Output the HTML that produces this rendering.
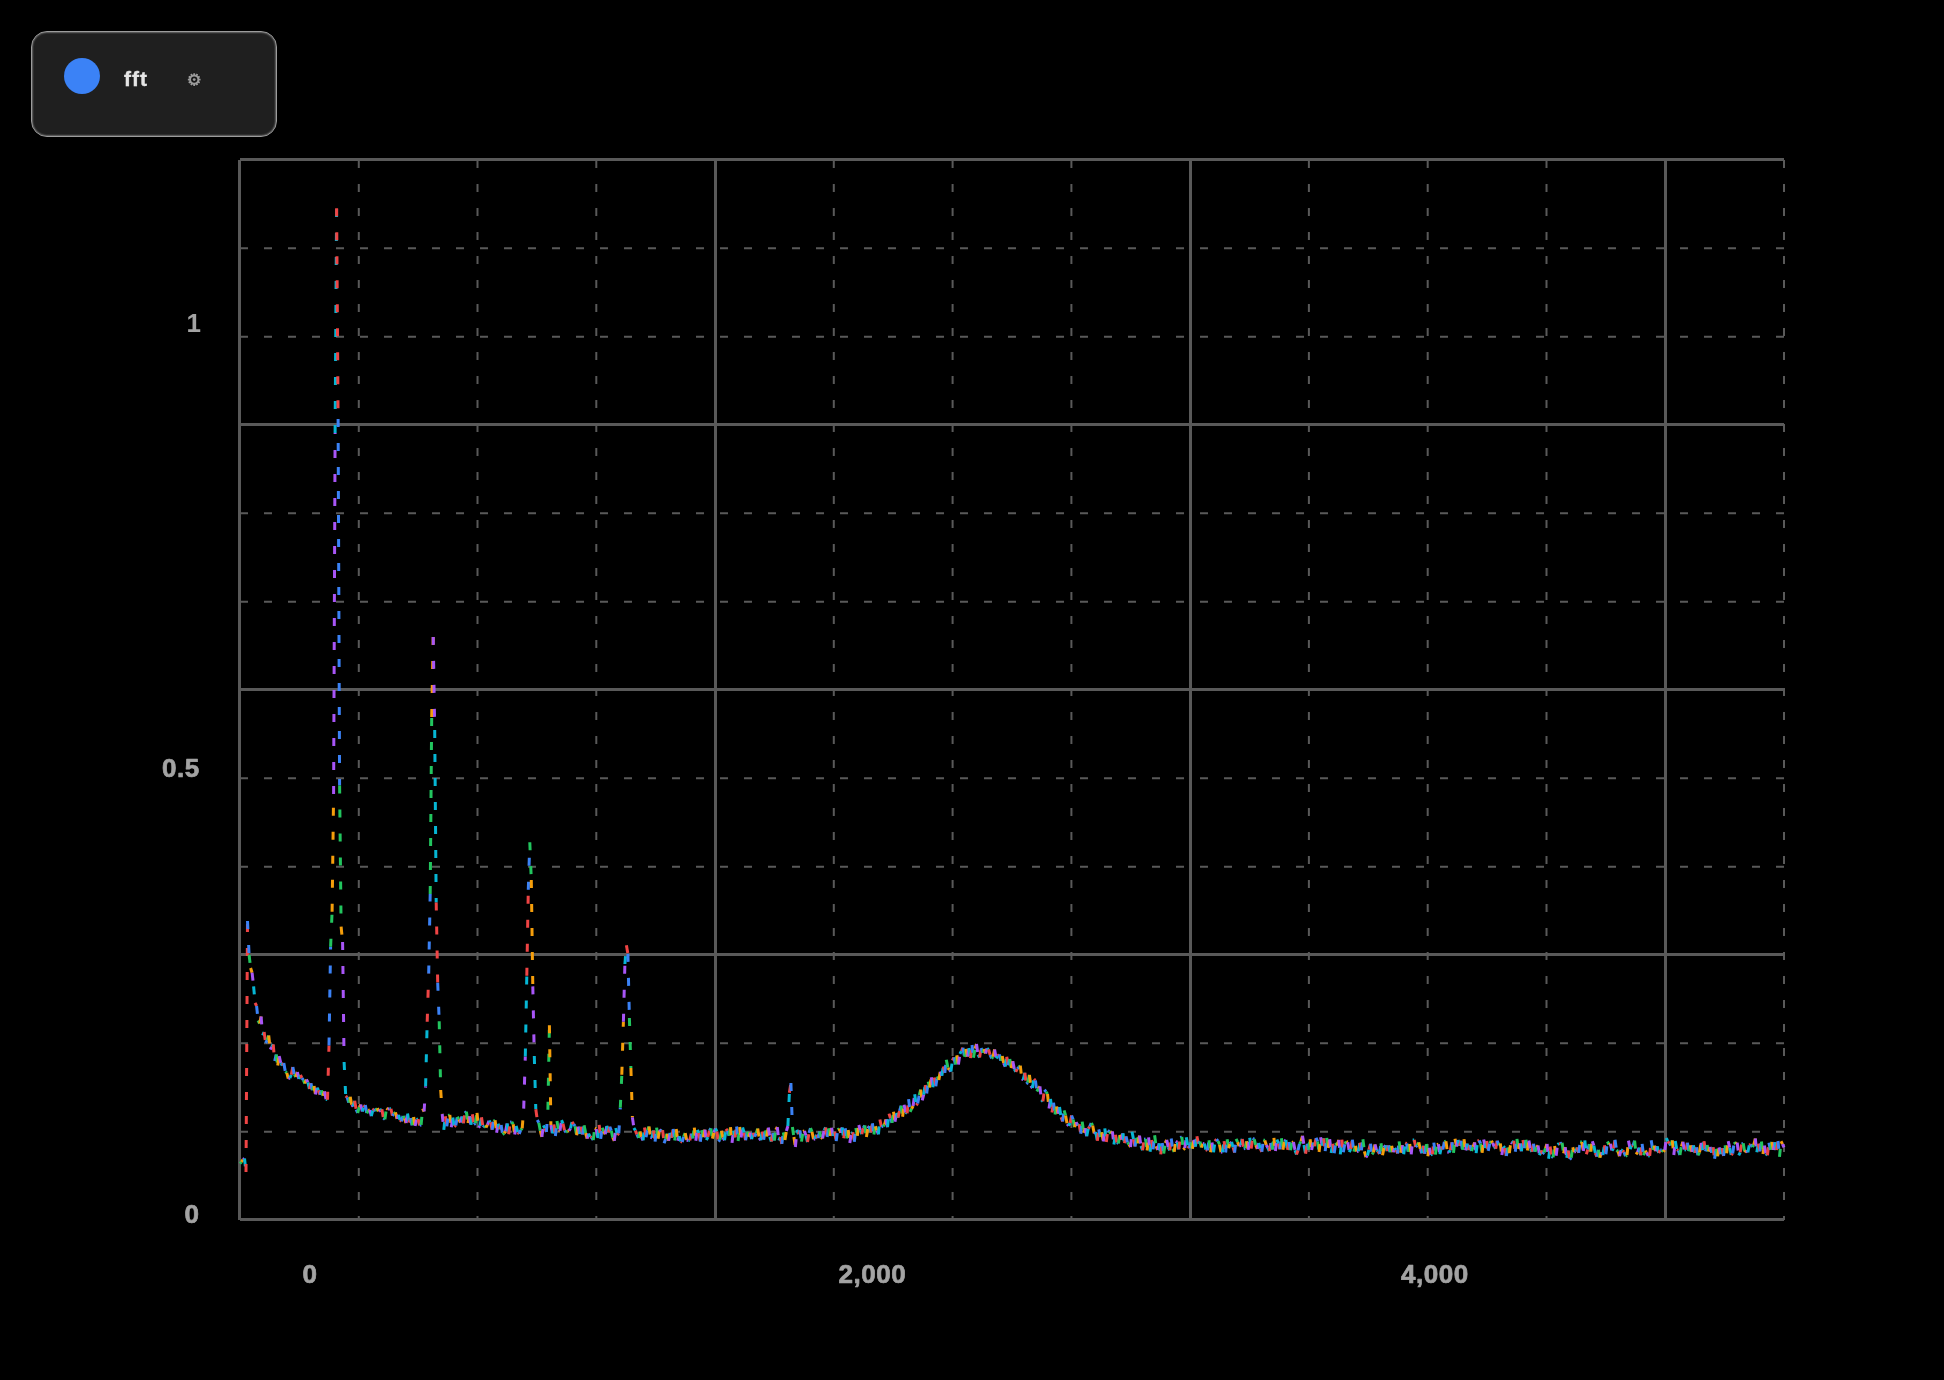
<!DOCTYPE html>
<html lang="en">
<head>
<meta charset="utf-8">
<title>fft</title>
<style>
html,body{margin:0;padding:0;background:#000;}
body{width:1944px;height:1380px;overflow:hidden;position:relative;font-family:"Liberation Sans",sans-serif;}
#chart{position:absolute;left:0;top:0;width:1944px;height:1380px;display:block;will-change:transform;}
.M{stroke:#595959;stroke-width:3;fill:none;}
.m{stroke:#595959;stroke-width:2;stroke-dasharray:8 16;fill:none;}
#curve path{fill:none;stroke-width:3;stroke-dasharray:8 16;stroke-linecap:butt;}
.g{stroke:#22c55e}.o{stroke:#f59e0b}.p{stroke:#a855f7}.c{stroke:#06b6d4}.r{stroke:#ef4444}.b{stroke:#3b82f6}
.tick{font-family:"Liberation Sans",sans-serif;font-weight:bold;font-size:26px;fill:#a3a3a3;stroke:#a3a3a3;stroke-width:0.7px;stroke-linejoin:round;letter-spacing:0.55px;}
#legend{will-change:transform;position:absolute;left:31px;top:31px;width:244px;height:104px;box-sizing:content-box;border:1px solid #9c9c9c;border-radius:16px;background:#1f1f1f;box-shadow:inset 0 0 0 1px #565656,inset 0 0 0 2px #2f2f2f;}
#dot{position:absolute;left:32px;top:26px;width:36px;height:36px;border-radius:50%;background:#3b82f6;}
#name{position:absolute;left:92px;top:34px;font-weight:bold;font-size:21px;line-height:26px;letter-spacing:1px;color:#e5e5e5;-webkit-text-stroke:0.4px #e5e5e5;white-space:nowrap;}
#icons{position:absolute;left:0;top:0;width:1944px;height:1380px;pointer-events:none;}
</style>
</head>
<body>
<svg id="chart" width="1944" height="1380" viewBox="0 0 1944 1380">
<rect x="0" y="0" width="1944" height="1380" fill="#000"/>
<g id="grid">
<line class="M" x1="239.5" y1="160" x2="239.5" y2="1220"/>
<line class="m" x1="358.8" y1="160" x2="358.8" y2="1220"/>
<line class="m" x1="477.5" y1="160" x2="477.5" y2="1220"/>
<line class="m" x1="596.3" y1="160" x2="596.3" y2="1220"/>
<line class="M" x1="715.5" y1="160" x2="715.5" y2="1220"/>
<line class="m" x1="833.8" y1="160" x2="833.8" y2="1220"/>
<line class="m" x1="952.6" y1="160" x2="952.6" y2="1220"/>
<line class="m" x1="1071.4" y1="160" x2="1071.4" y2="1220"/>
<line class="M" x1="1190.5" y1="160" x2="1190.5" y2="1220"/>
<line class="m" x1="1308.9" y1="160" x2="1308.9" y2="1220"/>
<line class="m" x1="1427.7" y1="160" x2="1427.7" y2="1220"/>
<line class="m" x1="1546.5" y1="160" x2="1546.5" y2="1220"/>
<line class="M" x1="1665.5" y1="160" x2="1665.5" y2="1220"/>
<line class="m" x1="1784" y1="160" x2="1784" y2="1220"/>
<line class="M" x1="240" y1="159.5" x2="1784" y2="159.5"/>
<line class="m" x1="240" y1="248.3" x2="1784" y2="248.3"/>
<line class="m" x1="240" y1="336.7" x2="1784" y2="336.7"/>
<line class="M" x1="240" y1="424.5" x2="1784" y2="424.5"/>
<line class="m" x1="240" y1="513.3" x2="1784" y2="513.3"/>
<line class="m" x1="240" y1="601.7" x2="1784" y2="601.7"/>
<line class="M" x1="240" y1="689.5" x2="1784" y2="689.5"/>
<line class="m" x1="240" y1="778.3" x2="1784" y2="778.3"/>
<line class="m" x1="240" y1="866.7" x2="1784" y2="866.7"/>
<line class="M" x1="240" y1="954.5" x2="1784" y2="954.5"/>
<line class="m" x1="240" y1="1043.3" x2="1784" y2="1043.3"/>
<line class="m" x1="240" y1="1131.7" x2="1784" y2="1131.7"/>
<line class="M" x1="240" y1="1219.5" x2="1784" y2="1219.5"/>
</g>
<g id="curve">
<path class="g" d="M240,1163.5L241.5,1162"/>
<path class="o" d="M241.5,1162L243,1159.5"/>
<path class="p" d="M243,1159.5L244.5,1158.5"/>
<path class="c" d="M244.5,1158.5L246,1172"/>
<path class="r" d="M246,1172L247.5,921"/>
<path class="b" d="M247.5,921L249.1,955"/>
<path class="g" d="M249.1,955L250.6,968"/>
<path class="o" d="M250.6,968L252.1,972.7"/>
<path class="p" d="M252.1,972.7L253.6,986.4"/>
<path class="c" d="M253.6,986.4L255.1,1002.8"/>
<path class="r" d="M255.1,1002.8L256.6,1006"/>
<path class="b" d="M256.6,1006L258.1,1020.5"/>
<path class="g" d="M258.1,1020.5L259.6,1023.5"/>
<path class="o" d="M259.6,1023.5L261.1,1016.5"/>
<path class="p" d="M261.1,1016.5L262.6,1035.3"/>
<path class="c" d="M262.6,1035.3L264.1,1032"/>
<path class="r" d="M264.1,1032L265.7,1043"/>
<path class="b" d="M265.7,1043L267.2,1040"/>
<path class="g" d="M267.2,1040L268.7,1035.5"/>
<path class="o" d="M268.7,1035.5L270.2,1049.5"/>
<path class="p" d="M270.2,1049.5L271.7,1047"/>
<path class="c" d="M271.7,1047L273.2,1044.3"/>
<path class="r" d="M273.2,1044.3L274.7,1061"/>
<path class="b" d="M274.7,1061L276.2,1054.5"/>
<path class="g" d="M276.2,1054.5L277.7,1065.5"/>
<path class="o" d="M277.7,1065.5L279.2,1056"/>
<path class="p" d="M279.2,1056L280.8,1063"/>
<path class="c" d="M280.8,1063L282.3,1065.5"/>
<path class="r" d="M282.3,1065.5L283.8,1063"/>
<path class="b" d="M283.8,1063L285.3,1071.6"/>
<path class="g" d="M285.3,1071.6L286.8,1072.8"/>
<path class="o" d="M286.8,1072.8L288.3,1078.6"/>
<path class="p" d="M288.3,1078.6L289.8,1078"/>
<path class="c" d="M289.8,1078L291.3,1074.8"/>
<path class="r" d="M291.3,1074.8L292.8,1067"/>
<path class="b" d="M292.8,1067L294.3,1074.3"/>
<path class="g" d="M294.3,1074.3L295.8,1077"/>
<path class="o" d="M295.8,1077L297.4,1072"/>
<path class="p" d="M297.4,1072L298.9,1079"/>
<path class="c" d="M298.9,1079L300.4,1075"/>
<path class="r" d="M300.4,1075L301.9,1078"/>
<path class="b" d="M301.9,1078L303.4,1080.2"/>
<path class="g" d="M303.4,1080.2L304.9,1083.6"/>
<path class="o" d="M304.9,1083.6L306.4,1079.5"/>
<path class="p" d="M306.4,1079.5L307.9,1082.3"/>
<path class="c" d="M307.9,1082.3L309.4,1089"/>
<path class="r" d="M309.4,1089L310.9,1083.2"/>
<path class="b" d="M310.9,1083.2L312.4,1090.2"/>
<path class="g" d="M312.4,1090.2L314,1085.9"/>
<path class="o" d="M314,1085.9L315.5,1094.5"/>
<path class="p" d="M315.5,1094.5L317,1087.7"/>
<path class="c" d="M317,1087.7L318.5,1090.3"/>
<path class="r" d="M318.5,1090.3L320,1094.8"/>
<path class="b" d="M320,1094.8L321.5,1090.4"/>
<path class="g" d="M321.5,1090.4L323,1095.8"/>
<path class="o" d="M323,1095.8L324.5,1091.4"/>
<path class="p" d="M324.5,1091.4L326,1099.1"/>
<path class="c" d="M326,1099.1L327.5,1099.7"/>
<path class="r" d="M327.5,1099.7L329,1045.5"/>
<path class="b" d="M329,1045.5L330.6,946.7"/>
<path class="g" d="M330.6,946.7L332.1,911.7"/>
<path class="o" d="M332.1,911.7L333.6,794"/>
<path class="p" d="M333.6,794L335.1,433"/>
<path class="c" d="M335.1,433L336.6,208.3"/>
<path class="r" d="M336.6,208.3L338.1,419"/>
<path class="b" d="M338.1,419L339.6,785.5"/>
<path class="g" d="M339.6,785.5L341.1,926.7"/>
<path class="o" d="M341.1,926.7L342.6,942"/>
<path class="p" d="M342.6,942L344.1,1062"/>
<path class="c" d="M344.1,1062L345.7,1096"/>
<path class="r" d="M345.7,1096L347.2,1097.4"/>
<path class="b" d="M347.2,1097.4L348.7,1102.6"/>
<path class="g" d="M348.7,1102.6L350.2,1096.8"/>
<path class="o" d="M350.2,1096.8L351.7,1104.8"/>
<path class="p" d="M351.7,1104.8L353.2,1106.5"/>
<path class="c" d="M353.2,1106.5L354.7,1100.8"/>
<path class="r" d="M354.7,1100.8L356.2,1109.7"/>
<path class="b" d="M356.2,1109.7L357.7,1113"/>
<path class="g" d="M357.7,1113L359.2,1107.2"/>
<path class="o" d="M359.2,1107.2L360.7,1104.5"/>
<path class="p" d="M360.7,1104.5L362.3,1111.5"/>
<path class="c" d="M362.3,1111.5L363.8,1107.6"/>
<path class="r" d="M363.8,1107.6L365.3,1105"/>
<path class="b" d="M365.3,1105L366.8,1113.4"/>
<path class="g" d="M366.8,1113.4L368.3,1110.4"/>
<path class="o" d="M368.3,1110.4L369.8,1110"/>
<path class="p" d="M369.8,1110L371.3,1116.2"/>
<path class="c" d="M371.3,1116.2L372.8,1110.4"/>
<path class="r" d="M372.8,1110.4L374.3,1108.7"/>
<path class="b" d="M374.3,1108.7L375.8,1111.2"/>
<path class="g" d="M375.8,1111.2L377.3,1108.2"/>
<path class="o" d="M377.3,1108.2L378.9,1111.3"/>
<path class="p" d="M378.9,1111.3L380.4,1110.2"/>
<path class="c" d="M380.4,1110.2L381.9,1109.2"/>
<path class="r" d="M381.9,1109.2L383.4,1118.2"/>
<path class="b" d="M383.4,1118.2L384.9,1119.4"/>
<path class="g" d="M384.9,1119.4L386.4,1108.3"/>
<path class="o" d="M386.4,1108.3L387.9,1109.3"/>
<path class="p" d="M387.9,1109.3L389.4,1108.7"/>
<path class="c" d="M389.4,1108.7L390.9,1108.7"/>
<path class="r" d="M390.9,1108.7L392.4,1115.7"/>
<path class="b" d="M392.4,1115.7L393.9,1113.9"/>
<path class="g" d="M393.9,1113.9L395.5,1112.3"/>
<path class="o" d="M395.5,1112.3L397,1118.8"/>
<path class="p" d="M397,1118.8L398.5,1114.8"/>
<path class="c" d="M398.5,1114.8L400,1119.9"/>
<path class="r" d="M400,1119.9L401.5,1121.3"/>
<path class="b" d="M401.5,1121.3L403,1116"/>
<path class="g" d="M403,1116L404.5,1118.2"/>
<path class="o" d="M404.5,1118.2L406,1123.1"/>
<path class="p" d="M406,1123.1L407.5,1113.6"/>
<path class="c" d="M407.5,1113.6L409,1122.6"/>
<path class="r" d="M409,1122.6L410.5,1118.1"/>
<path class="b" d="M410.5,1118.1L412.1,1125.3"/>
<path class="g" d="M412.1,1125.3L413.6,1117.1"/>
<path class="o" d="M413.6,1117.1L415.1,1126"/>
<path class="p" d="M415.1,1126L416.6,1119.6"/>
<path class="c" d="M416.6,1119.6L418.1,1119"/>
<path class="r" d="M418.1,1119L419.6,1125.5"/>
<path class="b" d="M419.6,1125.5L421.1,1124.8"/>
<path class="g" d="M421.1,1124.8L422.6,1108.6"/>
<path class="o" d="M422.6,1108.6L424.1,1111.5"/>
<path class="p" d="M424.1,1111.5L425.6,1086.3"/>
<path class="c" d="M425.6,1086.3L427.2,1021.8"/>
<path class="r" d="M427.2,1021.8L428.7,973.5"/>
<path class="b" d="M428.7,973.5L430.2,894"/>
<path class="g" d="M430.2,894L431.7,717"/>
<path class="o" d="M431.7,717L433.2,636.9"/>
<path class="p" d="M433.2,636.9L434.7,730"/>
<path class="c" d="M434.7,730L436.2,902.5"/>
<path class="r" d="M436.2,902.5L437.7,982.8"/>
<path class="b" d="M437.7,982.8L439.2,1021.2"/>
<path class="g" d="M439.2,1021.2L440.7,1090"/>
<path class="o" d="M440.7,1090L442.2,1114"/>
<path class="p" d="M442.2,1114L443.8,1129.8"/>
<path class="c" d="M443.8,1129.8L445.3,1116.2"/>
<path class="r" d="M445.3,1116.2L446.8,1126.4"/>
<path class="b" d="M446.8,1126.4L448.3,1115.6"/>
<path class="g" d="M448.3,1115.6L449.8,1114.9"/>
<path class="o" d="M449.8,1114.9L451.3,1127.2"/>
<path class="p" d="M451.3,1127.2L452.8,1117.5"/>
<path class="c" d="M452.8,1117.5L454.3,1126.7"/>
<path class="r" d="M454.3,1126.7L455.8,1125.4"/>
<path class="b" d="M455.8,1125.4L457.3,1116.7"/>
<path class="g" d="M457.3,1116.7L458.8,1119.3"/>
<path class="o" d="M458.8,1119.3L460.4,1122.5"/>
<path class="p" d="M460.4,1122.5L461.9,1116.5"/>
<path class="c" d="M461.9,1116.5L463.4,1123.3"/>
<path class="r" d="M463.4,1123.3L464.9,1113.1"/>
<path class="b" d="M464.9,1113.1L466.4,1111.6"/>
<path class="g" d="M466.4,1111.6L467.9,1123"/>
<path class="o" d="M467.9,1123L469.4,1116.3"/>
<path class="p" d="M469.4,1116.3L470.9,1124.9"/>
<path class="c" d="M470.9,1124.9L472.4,1114.3"/>
<path class="r" d="M472.4,1114.3L473.9,1124.5"/>
<path class="b" d="M473.9,1124.5L475.4,1123.2"/>
<path class="g" d="M475.4,1123.2L477,1112.8"/>
<path class="o" d="M477,1112.8L478.5,1127.5"/>
<path class="p" d="M478.5,1127.5L480,1126"/>
<path class="c" d="M480,1126L481.5,1117.2"/>
<path class="r" d="M481.5,1117.2L483,1127.2"/>
<path class="b" d="M483,1127.2L484.5,1125.7"/>
<path class="g" d="M484.5,1125.7L486,1127.7"/>
<path class="o" d="M486,1127.7L487.5,1124.7"/>
<path class="p" d="M487.5,1124.7L489,1120.8"/>
<path class="c" d="M489,1120.8L490.5,1122.3"/>
<path class="r" d="M490.5,1122.3L492.1,1129.7"/>
<path class="b" d="M492.1,1129.7L493.6,1121.3"/>
<path class="g" d="M493.6,1121.3L495.1,1120.3"/>
<path class="o" d="M495.1,1120.3L496.6,1132.8"/>
<path class="p" d="M496.6,1132.8L498.1,1123.7"/>
<path class="c" d="M498.1,1123.7L499.6,1129.3"/>
<path class="r" d="M499.6,1129.3L501.1,1124.9"/>
<path class="b" d="M501.1,1124.9L502.6,1134.5"/>
<path class="g" d="M502.6,1134.5L504.1,1133.2"/>
<path class="o" d="M504.1,1133.2L505.6,1131.3"/>
<path class="p" d="M505.6,1131.3L507.1,1123.5"/>
<path class="c" d="M507.1,1123.5L508.7,1134.3"/>
<path class="r" d="M508.7,1134.3L510.2,1122.3"/>
<path class="b" d="M510.2,1122.3L511.7,1121.9"/>
<path class="g" d="M511.7,1121.9L513.2,1124.3"/>
<path class="o" d="M513.2,1124.3L514.7,1134.5"/>
<path class="p" d="M514.7,1134.5L516.2,1125.9"/>
<path class="c" d="M516.2,1125.9L517.7,1132.2"/>
<path class="r" d="M517.7,1132.2L519.2,1133.9"/>
<path class="b" d="M519.2,1133.9L520.7,1130"/>
<path class="g" d="M520.7,1130L522.2,1128.3"/>
<path class="o" d="M522.2,1128.3L523.7,1108.6"/>
<path class="p" d="M523.7,1108.6L525.3,1056.5"/>
<path class="c" d="M525.3,1056.5L526.8,975.8"/>
<path class="r" d="M526.8,975.8L528.3,889.7"/>
<path class="b" d="M528.3,889.7L529.8,842.2"/>
<path class="g" d="M529.8,842.2L531.3,880"/>
<path class="o" d="M531.3,880L532.8,986.4"/>
<path class="p" d="M532.8,986.4L534.3,1056"/>
<path class="c" d="M534.3,1056L535.8,1109.2"/>
<path class="r" d="M535.8,1109.2L537.3,1120"/>
<path class="b" d="M537.3,1120L538.8,1122.8"/>
<path class="g" d="M538.8,1122.8L540.3,1130.9"/>
<path class="o" d="M540.3,1130.9L541.9,1136.9"/>
<path class="p" d="M541.9,1136.9L543.4,1125.4"/>
<path class="c" d="M543.4,1125.4L544.9,1128.2"/>
<path class="r" d="M544.9,1128.2L546.4,1132"/>
<path class="b" d="M546.4,1132L547.9,1109.8"/>
<path class="g" d="M547.9,1109.8L549.4,1025.2"/>
<path class="o" d="M549.4,1025.2L550.9,1125"/>
<path class="p" d="M550.9,1125L552.4,1133.6"/>
<path class="c" d="M552.4,1133.6L553.9,1124.4"/>
<path class="r" d="M553.9,1124.4L555.4,1136"/>
<path class="b" d="M555.4,1136L557,1121"/>
<path class="g" d="M557,1121L558.5,1130.1"/>
<path class="o" d="M558.5,1130.1L560,1130.7"/>
<path class="p" d="M560,1130.7L561.5,1120.2"/>
<path class="c" d="M561.5,1120.2L563,1123.6"/>
<path class="r" d="M563,1123.6L564.5,1130.5"/>
<path class="b" d="M564.5,1130.5L566,1132.2"/>
<path class="g" d="M566,1132.2L567.5,1131.1"/>
<path class="o" d="M567.5,1131.1L569,1130.7"/>
<path class="p" d="M569,1130.7L570.5,1128.4"/>
<path class="c" d="M570.5,1128.4L572,1122"/>
<path class="r" d="M572,1122L573.6,1124.2"/>
<path class="b" d="M573.6,1124.2L575.1,1126.2"/>
<path class="g" d="M575.1,1126.2L576.6,1135.2"/>
<path class="o" d="M576.6,1135.2L578.1,1126.5"/>
<path class="p" d="M578.1,1126.5L579.6,1134"/>
<path class="c" d="M579.6,1134L581.1,1126.7"/>
<path class="r" d="M581.1,1126.7L582.6,1134.5"/>
<path class="b" d="M582.6,1134.5L584.1,1125.3"/>
<path class="g" d="M584.1,1125.3L585.6,1133.1"/>
<path class="o" d="M585.6,1133.1L587.1,1138.6"/>
<path class="p" d="M587.1,1138.6L588.6,1133.6"/>
<path class="c" d="M588.6,1133.6L590.2,1136.8"/>
<path class="r" d="M590.2,1136.8L591.7,1137.5"/>
<path class="b" d="M591.7,1137.5L593.2,1140.1"/>
<path class="g" d="M593.2,1140.1L594.7,1128.4"/>
<path class="o" d="M594.7,1128.4L596.2,1128.9"/>
<path class="p" d="M596.2,1128.9L597.7,1138.2"/>
<path class="c" d="M597.7,1138.2L599.2,1124.9"/>
<path class="r" d="M599.2,1124.9L600.7,1138.9"/>
<path class="b" d="M600.7,1138.9L602.2,1127.7"/>
<path class="g" d="M602.2,1127.7L603.7,1131.4"/>
<path class="o" d="M603.7,1131.4L605.2,1134.3"/>
<path class="p" d="M605.2,1134.3L606.8,1125.7"/>
<path class="c" d="M606.8,1125.7L608.3,1132.5"/>
<path class="r" d="M608.3,1132.5L609.8,1126.7"/>
<path class="b" d="M609.8,1126.7L611.3,1130.8"/>
<path class="g" d="M611.3,1130.8L612.8,1137.7"/>
<path class="o" d="M612.8,1137.7L614.3,1140.8"/>
<path class="p" d="M614.3,1140.8L615.8,1128"/>
<path class="c" d="M615.8,1128L617.3,1135"/>
<path class="r" d="M617.3,1135L618.8,1133.3"/>
<path class="b" d="M618.8,1133.3L620.3,1107.8"/>
<path class="g" d="M620.3,1107.8L621.8,1074.8"/>
<path class="o" d="M621.8,1074.8L623.4,1021.7"/>
<path class="p" d="M623.4,1021.7L624.9,964"/>
<path class="c" d="M624.9,964L626.4,945.2"/>
<path class="r" d="M626.4,945.2L627.9,953.9"/>
<path class="b" d="M627.9,953.9L629.4,1018"/>
<path class="g" d="M629.4,1018L630.9,1068"/>
<path class="o" d="M630.9,1068L632.4,1117.4"/>
<path class="p" d="M632.4,1117.4L633.9,1128"/>
<path class="c" d="M633.9,1128L635.4,1130.6"/>
<path class="r" d="M635.4,1130.6L636.9,1134.4"/>
<path class="b" d="M636.9,1134.4L638.5,1137.8"/>
<path class="g" d="M638.5,1137.8L640,1131.5"/>
<path class="o" d="M640,1131.5L641.5,1136.8"/>
<path class="p" d="M641.5,1136.8L643,1140.3"/>
<path class="c" d="M643,1140.3L644.5,1127.4"/>
<path class="r" d="M644.5,1127.4L646,1137.2"/>
<path class="b" d="M646,1137.2L647.5,1130.3"/>
<path class="g" d="M647.5,1130.3L649,1126.5"/>
<path class="o" d="M649,1126.5L650.5,1137.3"/>
<path class="p" d="M650.5,1137.3L652,1137.7"/>
<path class="c" d="M652,1137.7L653.5,1130.5"/>
<path class="r" d="M653.5,1130.5L655.1,1141.6"/>
<path class="b" d="M655.1,1141.6L656.6,1127.6"/>
<path class="g" d="M656.6,1127.6L658.1,1138.7"/>
<path class="o" d="M658.1,1138.7L659.6,1129.4"/>
<path class="p" d="M659.6,1129.4L661.1,1131.6"/>
<path class="c" d="M661.1,1131.6L662.6,1130.2"/>
<path class="r" d="M662.6,1130.2L664.1,1143.3"/>
<path class="b" d="M664.1,1143.3L665.6,1139"/>
<path class="g" d="M665.6,1139L667.1,1133.7"/>
<path class="o" d="M667.1,1133.7L668.6,1140.8"/>
<path class="p" d="M668.6,1140.8L670.1,1132.7"/>
<path class="c" d="M670.1,1132.7L671.7,1137.8"/>
<path class="r" d="M671.7,1137.8L673.2,1128.9"/>
<path class="b" d="M673.2,1128.9L674.7,1140.5"/>
<path class="g" d="M674.7,1140.5L676.2,1129"/>
<path class="o" d="M676.2,1129L677.7,1140.7"/>
<path class="p" d="M677.7,1140.7L679.2,1136.2"/>
<path class="c" d="M679.2,1136.2L680.7,1141.4"/>
<path class="r" d="M680.7,1141.4L682.2,1142"/>
<path class="b" d="M682.2,1142L683.7,1136.6"/>
<path class="g" d="M683.7,1136.6L685.2,1133.1"/>
<path class="o" d="M685.2,1133.1L686.7,1140"/>
<path class="p" d="M686.7,1140L688.3,1140.5"/>
<path class="c" d="M688.3,1140.5L689.8,1140.3"/>
<path class="r" d="M689.8,1140.3L691.3,1133.6"/>
<path class="b" d="M691.3,1133.6L692.8,1138.4"/>
<path class="g" d="M692.8,1138.4L694.3,1127.6"/>
<path class="o" d="M694.3,1127.6L695.8,1140.7"/>
<path class="p" d="M695.8,1140.7L697.3,1129.9"/>
<path class="c" d="M697.3,1129.9L698.8,1133.1"/>
<path class="r" d="M698.8,1133.1L700.3,1141.8"/>
<path class="b" d="M700.3,1141.8L701.8,1130.2"/>
<path class="g" d="M701.8,1130.2L703.4,1137.1"/>
<path class="o" d="M703.4,1137.1L704.9,1129.6"/>
<path class="p" d="M704.9,1129.6L706.4,1140.1"/>
<path class="c" d="M706.4,1140.1L707.9,1137"/>
<path class="r" d="M707.9,1137L709.4,1130.5"/>
<path class="b" d="M709.4,1130.5L710.9,1128.4"/>
<path class="g" d="M710.9,1128.4L712.4,1138.7"/>
<path class="o" d="M712.4,1138.7L713.9,1132.6"/>
<path class="p" d="M713.9,1132.6L715.4,1128.5"/>
<path class="c" d="M715.4,1128.5L716.9,1131.5"/>
<path class="r" d="M716.9,1131.5L718.4,1141.6"/>
<path class="b" d="M718.4,1141.6L720,1139.8"/>
<path class="g" d="M720,1139.8L721.5,1130.7"/>
<path class="o" d="M721.5,1130.7L723,1137.6"/>
<path class="p" d="M723,1137.6L724.5,1140.2"/>
<path class="c" d="M724.5,1140.2L726,1128.8"/>
<path class="r" d="M726,1128.8L727.5,1130.9"/>
<path class="b" d="M727.5,1130.9L729,1135.8"/>
<path class="g" d="M729,1135.8L730.5,1127.1"/>
<path class="o" d="M730.5,1127.1L732,1142.9"/>
<path class="p" d="M732,1142.9L733.5,1130.6"/>
<path class="c" d="M733.5,1130.6L735,1137.4"/>
<path class="r" d="M735,1137.4L736.6,1126.5"/>
<path class="b" d="M736.6,1126.5L738.1,1141"/>
<path class="g" d="M738.1,1141L739.6,1127"/>
<path class="o" d="M739.6,1127L741.1,1137.5"/>
<path class="p" d="M741.1,1137.5L742.6,1127.3"/>
<path class="c" d="M742.6,1127.3L744.1,1132.7"/>
<path class="r" d="M744.1,1132.7L745.6,1140.3"/>
<path class="b" d="M745.6,1140.3L747.1,1131.7"/>
<path class="g" d="M747.1,1131.7L748.6,1136.7"/>
<path class="o" d="M748.6,1136.7L750.1,1132.6"/>
<path class="p" d="M750.1,1132.6L751.6,1139.2"/>
<path class="c" d="M751.6,1139.2L753.2,1132.8"/>
<path class="r" d="M753.2,1132.8L754.7,1136.6"/>
<path class="b" d="M754.7,1136.6L756.2,1133.3"/>
<path class="g" d="M756.2,1133.3L757.7,1128.6"/>
<path class="o" d="M757.7,1128.6L759.2,1137.9"/>
<path class="p" d="M759.2,1137.9L760.7,1140.3"/>
<path class="c" d="M760.7,1140.3L762.2,1131.4"/>
<path class="r" d="M762.2,1131.4L763.7,1139.8"/>
<path class="b" d="M763.7,1139.8L765.2,1130.4"/>
<path class="g" d="M765.2,1130.4L766.7,1136.4"/>
<path class="o" d="M766.7,1136.4L768.3,1127.6"/>
<path class="p" d="M768.3,1127.6L769.8,1136.8"/>
<path class="c" d="M769.8,1136.8L771.3,1141.6"/>
<path class="r" d="M771.3,1141.6L772.8,1133"/>
<path class="b" d="M772.8,1133L774.3,1140.5"/>
<path class="g" d="M774.3,1140.5L775.8,1129.8"/>
<path class="o" d="M775.8,1129.8L777.3,1127.1"/>
<path class="p" d="M777.3,1127.1L778.8,1140.5"/>
<path class="c" d="M778.8,1140.5L780.3,1137"/>
<path class="r" d="M780.3,1137L781.8,1143.9"/>
<path class="b" d="M781.8,1143.9L783.3,1132.4"/>
<path class="g" d="M783.3,1132.4L784.9,1139.9"/>
<path class="o" d="M784.9,1139.9L786.4,1131"/>
<path class="p" d="M786.4,1131L787.9,1126"/>
<path class="c" d="M787.9,1126L789.4,1092.8"/>
<path class="r" d="M789.4,1092.8L790.9,1083"/>
<path class="b" d="M790.9,1083L792.4,1127"/>
<path class="g" d="M792.4,1127L793.9,1137"/>
<path class="o" d="M793.9,1137L795.4,1147"/>
<path class="p" d="M795.4,1147L796.9,1129.8"/>
<path class="c" d="M796.9,1129.8L798.4,1134.3"/>
<path class="r" d="M798.4,1134.3L799.9,1130.4"/>
<path class="b" d="M799.9,1130.4L801.5,1141.6"/>
<path class="g" d="M801.5,1141.6L803,1131.5"/>
<path class="o" d="M803,1131.5L804.5,1131"/>
<path class="p" d="M804.5,1131L806,1135.6"/>
<path class="c" d="M806,1135.6L807.5,1142.1"/>
<path class="r" d="M807.5,1142.1L809,1132.9"/>
<path class="b" d="M809,1132.9L810.5,1128.2"/>
<path class="g" d="M810.5,1128.2L812,1131.8"/>
<path class="o" d="M812,1131.8L813.5,1139.3"/>
<path class="p" d="M813.5,1139.3L815,1138.8"/>
<path class="c" d="M815,1138.8L816.5,1134.8"/>
<path class="r" d="M816.5,1134.8L818.1,1138.2"/>
<path class="b" d="M818.1,1138.2L819.6,1131.5"/>
<path class="g" d="M819.6,1131.5L821.1,1137.4"/>
<path class="o" d="M821.1,1137.4L822.6,1138.6"/>
<path class="p" d="M822.6,1138.6L824.1,1130.2"/>
<path class="c" d="M824.1,1130.2L825.6,1127.6"/>
<path class="r" d="M825.6,1127.6L827.1,1137.1"/>
<path class="b" d="M827.1,1137.1L828.6,1128.3"/>
<path class="g" d="M828.6,1128.3L830.1,1135.9"/>
<path class="o" d="M830.1,1135.9L831.6,1127.8"/>
<path class="p" d="M831.6,1127.8L833.1,1136"/>
<path class="c" d="M833.1,1136L834.7,1131.6"/>
<path class="r" d="M834.7,1131.6L836.2,1141.1"/>
<path class="b" d="M836.2,1141.1L837.7,1129.7"/>
<path class="g" d="M837.7,1129.7L839.2,1128.6"/>
<path class="o" d="M839.2,1128.6L840.7,1132.8"/>
<path class="p" d="M840.7,1132.8L842.2,1127.5"/>
<path class="c" d="M842.2,1127.5L843.7,1138.2"/>
<path class="r" d="M843.7,1138.2L845.2,1128.2"/>
<path class="b" d="M845.2,1128.2L846.7,1138.6"/>
<path class="g" d="M846.7,1138.6L848.2,1130"/>
<path class="o" d="M848.2,1130L849.8,1142.9"/>
<path class="p" d="M849.8,1142.9L851.3,1133.6"/>
<path class="c" d="M851.3,1133.6L852.8,1132.3"/>
<path class="r" d="M852.8,1132.3L854.3,1141.9"/>
<path class="b" d="M854.3,1141.9L855.8,1128"/>
<path class="g" d="M855.8,1128L857.3,1135.8"/>
<path class="o" d="M857.3,1135.8L858.8,1125"/>
<path class="p" d="M858.8,1125L860.3,1130.3"/>
<path class="c" d="M860.3,1130.3L861.8,1134.1"/>
<path class="r" d="M861.8,1134.1L863.3,1128.1"/>
<path class="b" d="M863.3,1128.1L864.8,1125.4"/>
<path class="g" d="M864.8,1125.4L866.4,1136.9"/>
<path class="o" d="M866.4,1136.9L867.9,1128.4"/>
<path class="p" d="M867.9,1128.4L869.4,1126.2"/>
<path class="c" d="M869.4,1126.2L870.9,1132.5"/>
<path class="r" d="M870.9,1132.5L872.4,1123.3"/>
<path class="b" d="M872.4,1123.3L873.9,1134.6"/>
<path class="g" d="M873.9,1134.6L875.4,1126.2"/>
<path class="o" d="M875.4,1126.2L876.9,1130.4"/>
<path class="p" d="M876.9,1130.4L878.4,1134.3"/>
<path class="c" d="M878.4,1134.3L879.9,1119.5"/>
<path class="r" d="M879.9,1119.5L881.4,1126.7"/>
<path class="b" d="M881.4,1126.7L883,1126.2"/>
<path class="g" d="M883,1126.2L884.5,1124.6"/>
<path class="o" d="M884.5,1124.6L886,1119.4"/>
<path class="p" d="M886,1119.4L887.5,1127.2"/>
<path class="c" d="M887.5,1127.2L889,1113.6"/>
<path class="r" d="M889,1113.6L890.5,1118.4"/>
<path class="b" d="M890.5,1118.4L892,1122.9"/>
<path class="g" d="M892,1122.9L893.5,1111.8"/>
<path class="o" d="M893.5,1111.8L895,1121.8"/>
<path class="p" d="M895,1121.8L896.5,1112.9"/>
<path class="c" d="M896.5,1112.9L898,1117.7"/>
<path class="r" d="M898,1117.7L899.6,1110.8"/>
<path class="b" d="M899.6,1110.8L901.1,1105.7"/>
<path class="g" d="M901.1,1105.7L902.6,1116.7"/>
<path class="o" d="M902.6,1116.7L904.1,1104.7"/>
<path class="p" d="M904.1,1104.7L905.6,1112.5"/>
<path class="c" d="M905.6,1112.5L907.1,1113.3"/>
<path class="r" d="M907.1,1113.3L908.6,1099.1"/>
<path class="b" d="M908.6,1099.1L910.1,1111.8"/>
<path class="g" d="M910.1,1111.8L911.6,1108.7"/>
<path class="o" d="M911.6,1108.7L913.1,1106"/>
<path class="p" d="M913.1,1106L914.7,1094.2"/>
<path class="c" d="M914.7,1094.2L916.2,1105.1"/>
<path class="r" d="M916.2,1105.1L917.7,1103.5"/>
<path class="b" d="M917.7,1103.5L919.2,1095.1"/>
<path class="g" d="M919.2,1095.1L920.7,1089.6"/>
<path class="o" d="M920.7,1089.6L922.2,1100.4"/>
<path class="p" d="M922.2,1100.4L923.7,1094.7"/>
<path class="c" d="M923.7,1094.7L925.2,1085.1"/>
<path class="r" d="M925.2,1085.1L926.7,1093.5"/>
<path class="b" d="M926.7,1093.5L928.2,1081.7"/>
<path class="g" d="M928.2,1081.7L929.7,1087.5"/>
<path class="o" d="M929.7,1087.5L931.3,1077.3"/>
<path class="p" d="M931.3,1077.3L932.8,1087.3"/>
<path class="c" d="M932.8,1087.3L934.3,1077.6"/>
<path class="r" d="M934.3,1077.6L935.8,1086.4"/>
<path class="b" d="M935.8,1086.4L937.3,1076.3"/>
<path class="g" d="M937.3,1076.3L938.8,1079.9"/>
<path class="o" d="M938.8,1079.9L940.3,1071.5"/>
<path class="p" d="M940.3,1071.5L941.8,1075.8"/>
<path class="c" d="M941.8,1075.8L943.3,1066.3"/>
<path class="r" d="M943.3,1066.3L944.8,1072.9"/>
<path class="b" d="M944.8,1072.9L946.3,1059.8"/>
<path class="g" d="M946.3,1059.8L947.9,1067.8"/>
<path class="o" d="M947.9,1067.8L949.4,1069.8"/>
<path class="p" d="M949.4,1069.8L950.9,1071.6"/>
<path class="c" d="M950.9,1071.6L952.4,1060.5"/>
<path class="r" d="M952.4,1060.5L953.9,1057.4"/>
<path class="b" d="M953.9,1057.4L955.4,1064.4"/>
<path class="g" d="M955.4,1064.4L956.9,1055.3"/>
<path class="o" d="M956.9,1055.3L958.4,1064.6"/>
<path class="p" d="M958.4,1064.6L959.9,1053.9"/>
<path class="c" d="M959.9,1053.9L961.4,1051"/>
<path class="r" d="M961.4,1051L962.9,1047.7"/>
<path class="b" d="M962.9,1047.7L964.5,1056.9"/>
<path class="g" d="M964.5,1056.9L966,1048.9"/>
<path class="o" d="M966,1048.9L967.5,1056.6"/>
<path class="p" d="M967.5,1056.6L969,1048"/>
<path class="c" d="M969,1048L970.5,1058.2"/>
<path class="r" d="M970.5,1058.2L972,1045"/>
<path class="b" d="M972,1045L973.5,1057.7"/>
<path class="g" d="M973.5,1057.7L975,1048.6"/>
<path class="o" d="M975,1048.6L976.5,1044"/>
<path class="p" d="M976.5,1044L978,1054.8"/>
<path class="c" d="M978,1054.8L979.6,1057.6"/>
<path class="r" d="M979.6,1057.6L981.1,1048"/>
<path class="b" d="M981.1,1048L982.6,1052.7"/>
<path class="g" d="M982.6,1052.7L984.1,1049"/>
<path class="o" d="M984.1,1049L985.6,1053.5"/>
<path class="p" d="M985.6,1053.5L987.1,1048.4"/>
<path class="c" d="M987.1,1048.4L988.6,1049.4"/>
<path class="r" d="M988.6,1049.4L990.1,1054.8"/>
<path class="b" d="M990.1,1054.8L991.6,1058.4"/>
<path class="g" d="M991.6,1058.4L993.1,1056.8"/>
<path class="o" d="M993.1,1056.8L994.6,1049.4"/>
<path class="p" d="M994.6,1049.4L996.2,1058.3"/>
<path class="c" d="M996.2,1058.3L997.7,1056.1"/>
<path class="r" d="M997.7,1056.1L999.2,1054.4"/>
<path class="b" d="M999.2,1054.4L1000.7,1060.7"/>
<path class="g" d="M1000.7,1060.7L1002.2,1056"/>
<path class="o" d="M1002.2,1056L1003.7,1063.1"/>
<path class="p" d="M1003.7,1063.1L1005.2,1066.6"/>
<path class="c" d="M1005.2,1066.6L1006.7,1056.8"/>
<path class="r" d="M1006.7,1056.8L1008.2,1065.4"/>
<path class="b" d="M1008.2,1065.4L1009.7,1059"/>
<path class="g" d="M1009.7,1059L1011.2,1068.1"/>
<path class="o" d="M1011.2,1068.1L1012.8,1061.2"/>
<path class="p" d="M1012.8,1061.2L1014.3,1069"/>
<path class="c" d="M1014.3,1069L1015.8,1071.8"/>
<path class="r" d="M1015.8,1071.8L1017.3,1068.8"/>
<path class="b" d="M1017.3,1068.8L1018.8,1067.3"/>
<path class="g" d="M1018.8,1067.3L1020.3,1065.7"/>
<path class="o" d="M1020.3,1065.7L1021.8,1078.9"/>
<path class="p" d="M1021.8,1078.9L1023.3,1079.7"/>
<path class="c" d="M1023.3,1079.7L1024.8,1072.7"/>
<path class="r" d="M1024.8,1072.7L1026.3,1083.9"/>
<path class="b" d="M1026.3,1083.9L1027.8,1082.6"/>
<path class="g" d="M1027.8,1082.6L1029.4,1074.9"/>
<path class="o" d="M1029.4,1074.9L1030.9,1085.7"/>
<path class="p" d="M1030.9,1085.7L1032.4,1088.1"/>
<path class="c" d="M1032.4,1088.1L1033.9,1079"/>
<path class="r" d="M1033.9,1079L1035.4,1080.4"/>
<path class="b" d="M1035.4,1080.4L1036.9,1091.5"/>
<path class="g" d="M1036.9,1091.5L1038.4,1088.5"/>
<path class="o" d="M1038.4,1088.5L1039.9,1086.4"/>
<path class="p" d="M1039.9,1086.4L1041.4,1099.9"/>
<path class="c" d="M1041.4,1099.9L1042.9,1101.4"/>
<path class="r" d="M1042.9,1101.4L1044.4,1089.8"/>
<path class="b" d="M1044.4,1089.8L1046,1091.7"/>
<path class="g" d="M1046,1091.7L1047.5,1094"/>
<path class="o" d="M1047.5,1094L1049,1108.5"/>
<path class="p" d="M1049,1108.5L1050.5,1098.9"/>
<path class="c" d="M1050.5,1098.9L1052,1112.4"/>
<path class="r" d="M1052,1112.4L1053.5,1102.6"/>
<path class="b" d="M1053.5,1102.6L1055,1114.6"/>
<path class="g" d="M1055,1114.6L1056.5,1106.5"/>
<path class="o" d="M1056.5,1106.5L1058,1113.7"/>
<path class="p" d="M1058,1113.7L1059.5,1107.1"/>
<path class="c" d="M1059.5,1107.1L1061.1,1117.3"/>
<path class="r" d="M1061.1,1117.3L1062.6,1121.5"/>
<path class="b" d="M1062.6,1121.5L1064.1,1110.4"/>
<path class="g" d="M1064.1,1110.4L1065.6,1115.4"/>
<path class="o" d="M1065.6,1115.4L1067.1,1124"/>
<path class="p" d="M1067.1,1124L1068.6,1125.7"/>
<path class="c" d="M1068.6,1125.7L1070.1,1123"/>
<path class="r" d="M1070.1,1123L1071.6,1115.4"/>
<path class="b" d="M1071.6,1115.4L1073.1,1119.5"/>
<path class="g" d="M1073.1,1119.5L1074.6,1127.1"/>
<path class="o" d="M1074.6,1127.1L1076.1,1122.2"/>
<path class="p" d="M1076.1,1122.2L1077.7,1125.7"/>
<path class="c" d="M1077.7,1125.7L1079.2,1124.2"/>
<path class="r" d="M1079.2,1124.2L1080.7,1133.8"/>
<path class="b" d="M1080.7,1133.8L1082.2,1121.6"/>
<path class="g" d="M1082.2,1121.6L1083.7,1132.7"/>
<path class="o" d="M1083.7,1132.7L1085.2,1128.3"/>
<path class="p" d="M1085.2,1128.3L1086.7,1136.3"/>
<path class="c" d="M1086.7,1136.3L1088.2,1128.6"/>
<path class="r" d="M1088.2,1128.6L1089.7,1126.7"/>
<path class="b" d="M1089.7,1126.7L1091.2,1123.2"/>
<path class="g" d="M1091.2,1123.2L1092.7,1125.4"/>
<path class="o" d="M1092.7,1125.4L1094.3,1134.2"/>
<path class="p" d="M1094.3,1134.2L1095.8,1132"/>
<path class="c" d="M1095.8,1132L1097.3,1140.9"/>
<path class="r" d="M1097.3,1140.9L1098.8,1129.4"/>
<path class="b" d="M1098.8,1129.4L1100.3,1137"/>
<path class="g" d="M1100.3,1137L1101.8,1132.3"/>
<path class="o" d="M1101.8,1132.3L1103.3,1141.5"/>
<path class="p" d="M1103.3,1141.5L1104.8,1128.4"/>
<path class="c" d="M1104.8,1128.4L1106.3,1142"/>
<path class="r" d="M1106.3,1142L1107.8,1130.4"/>
<path class="b" d="M1107.8,1130.4L1109.3,1131.4"/>
<path class="g" d="M1109.3,1131.4L1110.9,1133.6"/>
<path class="o" d="M1110.9,1133.6L1112.4,1131.4"/>
<path class="p" d="M1112.4,1131.4L1113.9,1144.6"/>
<path class="c" d="M1113.9,1144.6L1115.4,1134.8"/>
<path class="r" d="M1115.4,1134.8L1116.9,1142.5"/>
<path class="b" d="M1116.9,1142.5L1118.4,1143.4"/>
<path class="g" d="M1118.4,1143.4L1119.9,1134.8"/>
<path class="o" d="M1119.9,1134.8L1121.4,1139.6"/>
<path class="p" d="M1121.4,1139.6L1122.9,1133.3"/>
<path class="c" d="M1122.9,1133.3L1124.4,1143.1"/>
<path class="r" d="M1124.4,1143.1L1126,1136.4"/>
<path class="b" d="M1126,1136.4L1127.5,1142.5"/>
<path class="g" d="M1127.5,1142.5L1129,1144.4"/>
<path class="o" d="M1129,1144.4L1130.5,1147"/>
<path class="p" d="M1130.5,1147L1132,1131.7"/>
<path class="c" d="M1132,1131.7L1133.5,1139.3"/>
<path class="r" d="M1133.5,1139.3L1135,1146.5"/>
<path class="b" d="M1135,1146.5L1136.5,1137.5"/>
<path class="g" d="M1136.5,1137.5L1138,1143.3"/>
<path class="o" d="M1138,1143.3L1139.5,1135.6"/>
<path class="p" d="M1139.5,1135.6L1141,1145.9"/>
<path class="c" d="M1141,1145.9L1142.6,1150.3"/>
<path class="r" d="M1142.6,1150.3L1144.1,1139.2"/>
<path class="b" d="M1144.1,1139.2L1145.6,1139"/>
<path class="g" d="M1145.6,1139L1147.1,1150.5"/>
<path class="o" d="M1147.1,1150.5L1148.6,1137.3"/>
<path class="p" d="M1148.6,1137.3L1150.1,1151.8"/>
<path class="c" d="M1150.1,1151.8L1151.6,1139.9"/>
<path class="r" d="M1151.6,1139.9L1153.1,1149.4"/>
<path class="b" d="M1153.1,1149.4L1154.6,1135.2"/>
<path class="g" d="M1154.6,1135.2L1156.1,1146.3"/>
<path class="o" d="M1156.1,1146.3L1157.6,1150"/>
<path class="p" d="M1157.6,1150L1159.2,1143.4"/>
<path class="c" d="M1159.2,1143.4L1160.7,1154.4"/>
<path class="r" d="M1160.7,1154.4L1162.2,1143"/>
<path class="b" d="M1162.2,1143L1163.7,1153.6"/>
<path class="g" d="M1163.7,1153.6L1165.2,1143"/>
<path class="o" d="M1165.2,1143L1166.7,1139.9"/>
<path class="p" d="M1166.7,1139.9L1168.2,1147.1"/>
<path class="c" d="M1168.2,1147.1L1169.7,1150.3"/>
<path class="r" d="M1169.7,1150.3L1171.2,1138.5"/>
<path class="b" d="M1171.2,1138.5L1172.7,1148.7"/>
<path class="g" d="M1172.7,1148.7L1174.2,1151.8"/>
<path class="o" d="M1174.2,1151.8L1175.8,1141.2"/>
<path class="p" d="M1175.8,1141.2L1177.3,1142.2"/>
<path class="c" d="M1177.3,1142.2L1178.8,1149.4"/>
<path class="r" d="M1178.8,1149.4L1180.3,1137.7"/>
<path class="b" d="M1180.3,1137.7L1181.8,1136.9"/>
<path class="g" d="M1181.8,1136.9L1183.3,1149.6"/>
<path class="o" d="M1183.3,1149.6L1184.8,1148.1"/>
<path class="p" d="M1184.8,1148.1L1186.3,1137.3"/>
<path class="c" d="M1186.3,1137.3L1187.8,1146"/>
<path class="r" d="M1187.8,1146L1189.3,1148"/>
<path class="b" d="M1189.3,1148L1190.9,1142.5"/>
<path class="g" d="M1190.9,1142.5L1192.4,1148.7"/>
<path class="o" d="M1192.4,1148.7L1193.9,1139.6"/>
<path class="p" d="M1193.9,1139.6L1195.4,1146.6"/>
<path class="c" d="M1195.4,1146.6L1196.9,1136.3"/>
<path class="r" d="M1196.9,1136.3L1198.4,1143.6"/>
<path class="b" d="M1198.4,1143.6L1199.9,1141.6"/>
<path class="g" d="M1199.9,1141.6L1201.4,1147.5"/>
<path class="o" d="M1201.4,1147.5L1202.9,1143.7"/>
<path class="p" d="M1202.9,1143.7L1204.4,1143.6"/>
<path class="c" d="M1204.4,1143.6L1205.9,1149.6"/>
<path class="r" d="M1205.9,1149.6L1207.5,1150.4"/>
<path class="b" d="M1207.5,1150.4L1209,1140.3"/>
<path class="g" d="M1209,1140.3L1210.5,1152.2"/>
<path class="o" d="M1210.5,1152.2L1212,1142.6"/>
<path class="p" d="M1212,1142.6L1213.5,1152.4"/>
<path class="c" d="M1213.5,1152.4L1215,1141.1"/>
<path class="r" d="M1215,1141.1L1216.5,1139.2"/>
<path class="b" d="M1216.5,1139.2L1218,1141.1"/>
<path class="g" d="M1218,1141.1L1219.5,1144.5"/>
<path class="o" d="M1219.5,1144.5L1221,1152.1"/>
<path class="p" d="M1221,1152.1L1222.5,1152.3"/>
<path class="c" d="M1222.5,1152.3L1224.1,1141.1"/>
<path class="r" d="M1224.1,1141.1L1225.6,1152.5"/>
<path class="b" d="M1225.6,1152.5L1227.1,1139.3"/>
<path class="g" d="M1227.1,1139.3L1228.6,1148.3"/>
<path class="o" d="M1228.6,1148.3L1230.1,1143.7"/>
<path class="p" d="M1230.1,1143.7L1231.6,1141.9"/>
<path class="c" d="M1231.6,1141.9L1233.1,1147.4"/>
<path class="r" d="M1233.1,1147.4L1234.6,1152.7"/>
<path class="b" d="M1234.6,1152.7L1236.1,1138.9"/>
<path class="g" d="M1236.1,1138.9L1237.6,1142.1"/>
<path class="o" d="M1237.6,1142.1L1239.1,1146.1"/>
<path class="p" d="M1239.1,1146.1L1240.7,1145.2"/>
<path class="c" d="M1240.7,1145.2L1242.2,1138.9"/>
<path class="r" d="M1242.2,1138.9L1243.7,1148.7"/>
<path class="b" d="M1243.7,1148.7L1245.2,1148.3"/>
<path class="g" d="M1245.2,1148.3L1246.7,1141.2"/>
<path class="o" d="M1246.7,1141.2L1248.2,1149.9"/>
<path class="p" d="M1248.2,1149.9L1249.7,1137.7"/>
<path class="c" d="M1249.7,1137.7L1251.2,1148.6"/>
<path class="r" d="M1251.2,1148.6L1252.7,1138.2"/>
<path class="b" d="M1252.7,1138.2L1254.2,1139.2"/>
<path class="g" d="M1254.2,1139.2L1255.7,1145.2"/>
<path class="o" d="M1255.7,1145.2L1257.3,1148.9"/>
<path class="p" d="M1257.3,1148.9L1258.8,1143"/>
<path class="c" d="M1258.8,1143L1260.3,1148.7"/>
<path class="r" d="M1260.3,1148.7L1261.8,1151.8"/>
<path class="b" d="M1261.8,1151.8L1263.3,1139.9"/>
<path class="g" d="M1263.3,1139.9L1264.8,1140.4"/>
<path class="o" d="M1264.8,1140.4L1266.3,1145"/>
<path class="p" d="M1266.3,1145L1267.8,1147.7"/>
<path class="c" d="M1267.8,1147.7L1269.3,1151.1"/>
<path class="r" d="M1269.3,1151.1L1270.8,1142.8"/>
<path class="b" d="M1270.8,1142.8L1272.4,1149.5"/>
<path class="g" d="M1272.4,1149.5L1273.9,1137.9"/>
<path class="o" d="M1273.9,1137.9L1275.4,1151"/>
<path class="p" d="M1275.4,1151L1276.9,1139.4"/>
<path class="c" d="M1276.9,1139.4L1278.4,1143.7"/>
<path class="r" d="M1278.4,1143.7L1279.9,1149.3"/>
<path class="b" d="M1279.9,1149.3L1281.4,1138.3"/>
<path class="g" d="M1281.4,1138.3L1282.9,1149.7"/>
<path class="o" d="M1282.9,1149.7L1284.4,1141.3"/>
<path class="p" d="M1284.4,1141.3L1285.9,1140"/>
<path class="c" d="M1285.9,1140L1287.4,1149.9"/>
<path class="r" d="M1287.4,1149.9L1289,1142.1"/>
<path class="b" d="M1289,1142.1L1290.5,1150.3"/>
<path class="g" d="M1290.5,1150.3L1292,1142.6"/>
<path class="o" d="M1292,1142.6L1293.5,1142"/>
<path class="p" d="M1293.5,1142L1295,1150.2"/>
<path class="c" d="M1295,1150.2L1296.5,1154.5"/>
<path class="r" d="M1296.5,1154.5L1298,1150.3"/>
<path class="b" d="M1298,1150.3L1299.5,1143.9"/>
<path class="g" d="M1299.5,1143.9L1301,1141.4"/>
<path class="o" d="M1301,1141.4L1302.5,1135.8"/>
<path class="p" d="M1302.5,1135.8L1304,1145.1"/>
<path class="c" d="M1304,1145.1L1305.6,1153.7"/>
<path class="r" d="M1305.6,1153.7L1307.1,1143.7"/>
<path class="b" d="M1307.1,1143.7L1308.6,1149.6"/>
<path class="g" d="M1308.6,1149.6L1310.1,1139.2"/>
<path class="o" d="M1310.1,1139.2L1311.6,1150"/>
<path class="p" d="M1311.6,1150L1313.1,1142.6"/>
<path class="c" d="M1313.1,1142.6L1314.6,1146.3"/>
<path class="r" d="M1314.6,1146.3L1316.1,1137.7"/>
<path class="b" d="M1316.1,1137.7L1317.6,1141.5"/>
<path class="g" d="M1317.6,1141.5L1319.1,1152"/>
<path class="o" d="M1319.1,1152L1320.6,1137.3"/>
<path class="p" d="M1320.6,1137.3L1322.2,1145.7"/>
<path class="c" d="M1322.2,1145.7L1323.7,1138.4"/>
<path class="r" d="M1323.7,1138.4L1325.2,1151.2"/>
<path class="b" d="M1325.2,1151.2L1326.7,1137.9"/>
<path class="g" d="M1326.7,1137.9L1328.2,1147.9"/>
<path class="o" d="M1328.2,1147.9L1329.7,1139.1"/>
<path class="p" d="M1329.7,1139.1L1331.2,1153"/>
<path class="c" d="M1331.2,1153L1332.7,1143.8"/>
<path class="r" d="M1332.7,1143.8L1334.2,1153.3"/>
<path class="b" d="M1334.2,1153.3L1335.7,1142.8"/>
<path class="g" d="M1335.7,1142.8L1337.3,1145.6"/>
<path class="o" d="M1337.3,1145.6L1338.8,1139.8"/>
<path class="p" d="M1338.8,1139.8L1340.3,1154.4"/>
<path class="c" d="M1340.3,1154.4L1341.8,1139.6"/>
<path class="r" d="M1341.8,1139.6L1343.3,1152.2"/>
<path class="b" d="M1343.3,1152.2L1344.8,1143.9"/>
<path class="g" d="M1344.8,1143.9L1346.3,1141.5"/>
<path class="o" d="M1346.3,1141.5L1347.8,1142.2"/>
<path class="p" d="M1347.8,1142.2L1349.3,1152.1"/>
<path class="c" d="M1349.3,1152.1L1350.8,1148.9"/>
<path class="r" d="M1350.8,1148.9L1352.3,1139.6"/>
<path class="b" d="M1352.3,1139.6L1353.9,1151.6"/>
<path class="g" d="M1353.9,1151.6L1355.4,1145.9"/>
<path class="o" d="M1355.4,1145.9L1356.9,1151.5"/>
<path class="p" d="M1356.9,1151.5L1358.4,1151.2"/>
<path class="c" d="M1358.4,1151.2L1359.9,1142.6"/>
<path class="r" d="M1359.9,1142.6L1361.4,1150.3"/>
<path class="b" d="M1361.4,1150.3L1362.9,1139.2"/>
<path class="g" d="M1362.9,1139.2L1364.4,1151.4"/>
<path class="o" d="M1364.4,1151.4L1365.9,1157.2"/>
<path class="p" d="M1365.9,1157.2L1367.4,1155.7"/>
<path class="c" d="M1367.4,1155.7L1368.9,1149.7"/>
<path class="r" d="M1368.9,1149.7L1370.5,1143.8"/>
<path class="b" d="M1370.5,1143.8L1372,1154.3"/>
<path class="g" d="M1372,1154.3L1373.5,1152.4"/>
<path class="o" d="M1373.5,1152.4L1375,1144.4"/>
<path class="p" d="M1375,1144.4L1376.5,1150.1"/>
<path class="c" d="M1376.5,1150.1L1378,1151.2"/>
<path class="r" d="M1378,1151.2L1379.5,1154"/>
<path class="b" d="M1379.5,1154L1381,1143.3"/>
<path class="g" d="M1381,1143.3L1382.5,1155.3"/>
<path class="o" d="M1382.5,1155.3L1384,1147.6"/>
<path class="p" d="M1384,1147.6L1385.5,1145.3"/>
<path class="c" d="M1385.5,1145.3L1387.1,1151.1"/>
<path class="r" d="M1387.1,1151.1L1388.6,1145.4"/>
<path class="b" d="M1388.6,1145.4L1390.1,1152.2"/>
<path class="g" d="M1390.1,1152.2L1391.6,1145.9"/>
<path class="o" d="M1391.6,1145.9L1393.1,1152.2"/>
<path class="p" d="M1393.1,1152.2L1394.6,1148.2"/>
<path class="c" d="M1394.6,1148.2L1396.1,1150"/>
<path class="r" d="M1396.1,1150L1397.6,1153.5"/>
<path class="b" d="M1397.6,1153.5L1399.1,1141.4"/>
<path class="g" d="M1399.1,1141.4L1400.6,1152.8"/>
<path class="o" d="M1400.6,1152.8L1402.2,1145.2"/>
<path class="p" d="M1402.2,1145.2L1403.7,1154.3"/>
<path class="c" d="M1403.7,1154.3L1405.2,1142.9"/>
<path class="r" d="M1405.2,1142.9L1406.7,1143.6"/>
<path class="b" d="M1406.7,1143.6L1408.2,1151.9"/>
<path class="g" d="M1408.2,1151.9L1409.7,1144"/>
<path class="o" d="M1409.7,1144L1411.2,1154.3"/>
<path class="p" d="M1411.2,1154.3L1412.7,1140"/>
<path class="c" d="M1412.7,1140L1414.2,1139.9"/>
<path class="r" d="M1414.2,1139.9L1415.7,1147"/>
<path class="b" d="M1415.7,1147L1417.2,1145.5"/>
<path class="g" d="M1417.2,1145.5L1418.8,1142.3"/>
<path class="o" d="M1418.8,1142.3L1420.3,1149"/>
<path class="p" d="M1420.3,1149L1421.8,1153.2"/>
<path class="c" d="M1421.8,1153.2L1423.3,1145.8"/>
<path class="r" d="M1423.3,1145.8L1424.8,1153.8"/>
<path class="b" d="M1424.8,1153.8L1426.3,1144"/>
<path class="g" d="M1426.3,1144L1427.8,1156.2"/>
<path class="o" d="M1427.8,1156.2L1429.3,1147.7"/>
<path class="p" d="M1429.3,1147.7L1430.8,1154.9"/>
<path class="c" d="M1430.8,1154.9L1432.3,1154.4"/>
<path class="r" d="M1432.3,1154.4L1433.8,1142.6"/>
<path class="b" d="M1433.8,1142.6L1435.4,1154.6"/>
<path class="g" d="M1435.4,1154.6L1436.9,1144.7"/>
<path class="o" d="M1436.9,1144.7L1438.4,1144.3"/>
<path class="p" d="M1438.4,1144.3L1439.9,1154.2"/>
<path class="c" d="M1439.9,1154.2L1441.4,1146.5"/>
<path class="r" d="M1441.4,1146.5L1442.9,1149.5"/>
<path class="b" d="M1442.9,1149.5L1444.4,1141.7"/>
<path class="g" d="M1444.4,1141.7L1445.9,1141.2"/>
<path class="o" d="M1445.9,1141.2L1447.4,1152"/>
<path class="p" d="M1447.4,1152L1448.9,1152.3"/>
<path class="c" d="M1448.9,1152.3L1450.4,1150.1"/>
<path class="r" d="M1450.4,1150.1L1452,1142.2"/>
<path class="b" d="M1452,1142.2L1453.5,1152.9"/>
<path class="g" d="M1453.5,1152.9L1455,1138.7"/>
<path class="o" d="M1455,1138.7L1456.5,1146.5"/>
<path class="p" d="M1456.5,1146.5L1458,1140"/>
<path class="c" d="M1458,1140L1459.5,1145.8"/>
<path class="r" d="M1459.5,1145.8L1461,1140.8"/>
<path class="b" d="M1461,1140.8L1462.5,1149.9"/>
<path class="g" d="M1462.5,1149.9L1464,1139.1"/>
<path class="o" d="M1464,1139.1L1465.5,1150.3"/>
<path class="p" d="M1465.5,1150.3L1467,1143.7"/>
<path class="c" d="M1467,1143.7L1468.6,1150.2"/>
<path class="r" d="M1468.6,1150.2L1470.1,1145"/>
<path class="b" d="M1470.1,1145L1471.6,1151"/>
<path class="g" d="M1471.6,1151L1473.1,1146.9"/>
<path class="o" d="M1473.1,1146.9L1474.6,1142.4"/>
<path class="p" d="M1474.6,1142.4L1476.1,1153.1"/>
<path class="c" d="M1476.1,1153.1L1477.6,1141.1"/>
<path class="r" d="M1477.6,1141.1L1479.1,1140.5"/>
<path class="b" d="M1479.1,1140.5L1480.6,1143.5"/>
<path class="g" d="M1480.6,1143.5L1482.1,1152.9"/>
<path class="o" d="M1482.1,1152.9L1483.7,1139.6"/>
<path class="p" d="M1483.7,1139.6L1485.2,1148.1"/>
<path class="c" d="M1485.2,1148.1L1486.7,1141.1"/>
<path class="r" d="M1486.7,1141.1L1488.2,1150.9"/>
<path class="b" d="M1488.2,1150.9L1489.7,1143.6"/>
<path class="g" d="M1489.7,1143.6L1491.2,1140.9"/>
<path class="o" d="M1491.2,1140.9L1492.7,1142.7"/>
<path class="p" d="M1492.7,1142.7L1494.2,1146.6"/>
<path class="c" d="M1494.2,1146.6L1495.7,1148.7"/>
<path class="r" d="M1495.7,1148.7L1497.2,1140.6"/>
<path class="b" d="M1497.2,1140.6L1498.7,1145.2"/>
<path class="g" d="M1498.7,1145.2L1500.3,1143.5"/>
<path class="o" d="M1500.3,1143.5L1501.8,1154.9"/>
<path class="p" d="M1501.8,1154.9L1503.3,1146.4"/>
<path class="c" d="M1503.3,1146.4L1504.8,1148"/>
<path class="r" d="M1504.8,1148L1506.3,1156"/>
<path class="b" d="M1506.3,1156L1507.8,1147.4"/>
<path class="g" d="M1507.8,1147.4L1509.3,1153.1"/>
<path class="o" d="M1509.3,1153.1L1510.8,1142.5"/>
<path class="p" d="M1510.8,1142.5L1512.3,1143.3"/>
<path class="c" d="M1512.3,1143.3L1513.8,1140.8"/>
<path class="r" d="M1513.8,1140.8L1515.3,1151.8"/>
<path class="b" d="M1515.3,1151.8L1516.9,1138.9"/>
<path class="g" d="M1516.9,1138.9L1518.4,1149"/>
<path class="o" d="M1518.4,1149L1519.9,1143.5"/>
<path class="p" d="M1519.9,1143.5L1521.4,1151.3"/>
<path class="c" d="M1521.4,1151.3L1522.9,1139.9"/>
<path class="r" d="M1522.9,1139.9L1524.4,1148.2"/>
<path class="b" d="M1524.4,1148.2L1525.9,1139.8"/>
<path class="g" d="M1525.9,1139.8L1527.4,1150.5"/>
<path class="o" d="M1527.4,1150.5L1528.9,1140.6"/>
<path class="p" d="M1528.9,1140.6L1530.4,1149.1"/>
<path class="c" d="M1530.4,1149.1L1531.9,1151.7"/>
<path class="r" d="M1531.9,1151.7L1533.5,1143.8"/>
<path class="b" d="M1533.5,1143.8L1535,1151.7"/>
<path class="g" d="M1535,1151.7L1536.5,1147.2"/>
<path class="o" d="M1536.5,1147.2L1538,1145.4"/>
<path class="p" d="M1538,1145.4L1539.5,1155.2"/>
<path class="c" d="M1539.5,1155.2L1541,1150.4"/>
<path class="r" d="M1541,1150.4L1542.5,1153.8"/>
<path class="b" d="M1542.5,1153.8L1544,1152.4"/>
<path class="g" d="M1544,1152.4L1545.5,1148.3"/>
<path class="o" d="M1545.5,1148.3L1547,1144"/>
<path class="p" d="M1547,1144L1548.6,1158.8"/>
<path class="c" d="M1548.6,1158.8L1550.1,1146.5"/>
<path class="r" d="M1550.1,1146.5L1551.6,1156.5"/>
<path class="b" d="M1551.6,1156.5L1553.1,1157.4"/>
<path class="g" d="M1553.1,1157.4L1554.6,1146.1"/>
<path class="o" d="M1554.6,1146.1L1556.1,1155.7"/>
<path class="p" d="M1556.1,1155.7L1557.6,1144.5"/>
<path class="c" d="M1557.6,1144.5L1559.1,1143.5"/>
<path class="r" d="M1559.1,1143.5L1560.6,1143.8"/>
<path class="b" d="M1560.6,1143.8L1562.1,1142.7"/>
<path class="g" d="M1562.1,1142.7L1563.6,1153.4"/>
<path class="o" d="M1563.6,1153.4L1565.2,1147.2"/>
<path class="p" d="M1565.2,1147.2L1566.7,1157.9"/>
<path class="c" d="M1566.7,1157.9L1568.2,1150.6"/>
<path class="r" d="M1568.2,1150.6L1569.7,1159.4"/>
<path class="b" d="M1569.7,1159.4L1571.2,1157.7"/>
<path class="g" d="M1571.2,1157.7L1572.7,1147.2"/>
<path class="o" d="M1572.7,1147.2L1574.2,1152"/>
<path class="p" d="M1574.2,1152L1575.7,1151.6"/>
<path class="c" d="M1575.7,1151.6L1577.2,1147.4"/>
<path class="r" d="M1577.2,1147.4L1578.7,1152.9"/>
<path class="b" d="M1578.7,1152.9L1580.2,1141.8"/>
<path class="g" d="M1580.2,1141.8L1581.8,1142.1"/>
<path class="o" d="M1581.8,1142.1L1583.3,1151"/>
<path class="p" d="M1583.3,1151L1584.8,1140.3"/>
<path class="c" d="M1584.8,1140.3L1586.3,1154.3"/>
<path class="r" d="M1586.3,1154.3L1587.8,1149.5"/>
<path class="b" d="M1587.8,1149.5L1589.3,1144.1"/>
<path class="g" d="M1589.3,1144.1L1590.8,1151.6"/>
<path class="o" d="M1590.8,1151.6L1592.3,1141.3"/>
<path class="p" d="M1592.3,1141.3L1593.8,1145.6"/>
<path class="c" d="M1593.8,1145.6L1595.3,1153"/>
<path class="r" d="M1595.3,1153L1596.8,1156.6"/>
<path class="b" d="M1596.8,1156.6L1598.4,1149.9"/>
<path class="g" d="M1598.4,1149.9L1599.9,1157.7"/>
<path class="o" d="M1599.9,1157.7L1601.4,1152.3"/>
<path class="p" d="M1601.4,1152.3L1602.9,1154.9"/>
<path class="c" d="M1602.9,1154.9L1604.4,1145.2"/>
<path class="r" d="M1604.4,1145.2L1605.9,1154.2"/>
<path class="b" d="M1605.9,1154.2L1607.4,1141.5"/>
<path class="g" d="M1607.4,1141.5L1608.9,1144.7"/>
<path class="o" d="M1608.9,1144.7L1610.4,1143.8"/>
<path class="p" d="M1610.4,1143.8L1611.9,1150.5"/>
<path class="c" d="M1611.9,1150.5L1613.5,1148.5"/>
<path class="r" d="M1613.5,1148.5L1615,1139.7"/>
<path class="b" d="M1615,1139.7L1616.5,1150.1"/>
<path class="g" d="M1616.5,1150.1L1618,1151.4"/>
<path class="o" d="M1618,1151.4L1619.5,1156.2"/>
<path class="p" d="M1619.5,1156.2L1621,1150"/>
<path class="c" d="M1621,1150L1622.5,1150.6"/>
<path class="r" d="M1622.5,1150.6L1624,1152.1"/>
<path class="b" d="M1624,1152.1L1625.5,1156.1"/>
<path class="g" d="M1625.5,1156.1L1627,1155.2"/>
<path class="o" d="M1627,1155.2L1628.5,1140.6"/>
<path class="p" d="M1628.5,1140.6L1630.1,1149.1"/>
<path class="c" d="M1630.1,1149.1L1631.6,1145.6"/>
<path class="r" d="M1631.6,1145.6L1633.1,1145.5"/>
<path class="b" d="M1633.1,1145.5L1634.6,1140.7"/>
<path class="g" d="M1634.6,1140.7L1636.1,1154.4"/>
<path class="o" d="M1636.1,1154.4L1637.6,1152.1"/>
<path class="p" d="M1637.6,1152.1L1639.1,1147.6"/>
<path class="c" d="M1639.1,1147.6L1640.6,1155.3"/>
<path class="r" d="M1640.6,1155.3L1642.1,1143.9"/>
<path class="b" d="M1642.1,1143.9L1643.6,1155.2"/>
<path class="g" d="M1643.6,1155.2L1645.1,1150.9"/>
<path class="o" d="M1645.1,1150.9L1646.7,1152.3"/>
<path class="p" d="M1646.7,1152.3L1648.2,1155.9"/>
<path class="c" d="M1648.2,1155.9L1649.7,1155.8"/>
<path class="r" d="M1649.7,1155.8L1651.2,1140.3"/>
<path class="b" d="M1651.2,1140.3L1652.7,1149.9"/>
<path class="g" d="M1652.7,1149.9L1654.2,1145.7"/>
<path class="o" d="M1654.2,1145.7L1655.7,1151.2"/>
<path class="p" d="M1655.7,1151.2L1657.2,1146.2"/>
<path class="c" d="M1657.2,1146.2L1658.7,1153"/>
<path class="r" d="M1658.7,1153L1660.2,1150.1"/>
<path class="b" d="M1660.2,1150.1L1661.7,1150.1"/>
<path class="g" d="M1661.7,1150.1L1663.3,1151.6"/>
<path class="o" d="M1663.3,1151.6L1664.8,1150"/>
<path class="p" d="M1664.8,1150L1666.3,1138"/>
<path class="c" d="M1666.3,1138L1667.8,1141.4"/>
<path class="r" d="M1667.8,1141.4L1669.3,1143.5"/>
<path class="b" d="M1669.3,1143.5L1670.8,1145.4"/>
<path class="g" d="M1670.8,1145.4L1672.3,1140.4"/>
<path class="o" d="M1672.3,1140.4L1673.8,1155"/>
<path class="p" d="M1673.8,1155L1675.3,1141.1"/>
<path class="c" d="M1675.3,1141.1L1676.8,1149.7"/>
<path class="r" d="M1676.8,1149.7L1678.3,1150.4"/>
<path class="b" d="M1678.3,1150.4L1679.9,1155"/>
<path class="g" d="M1679.9,1155L1681.4,1146.4"/>
<path class="o" d="M1681.4,1146.4L1682.9,1141.7"/>
<path class="p" d="M1682.9,1141.7L1684.4,1150.1"/>
<path class="c" d="M1684.4,1150.1L1685.9,1149.8"/>
<path class="r" d="M1685.9,1149.8L1687.4,1142.8"/>
<path class="b" d="M1687.4,1142.8L1688.9,1151.4"/>
<path class="g" d="M1688.9,1151.4L1690.4,1145.3"/>
<path class="o" d="M1690.4,1145.3L1691.9,1151.8"/>
<path class="p" d="M1691.9,1151.8L1693.4,1145.4"/>
<path class="c" d="M1693.4,1145.4L1695,1152.9"/>
<path class="r" d="M1695,1152.9L1696.5,1147.4"/>
<path class="b" d="M1696.5,1147.4L1698,1155.4"/>
<path class="g" d="M1698,1155.4L1699.5,1152.5"/>
<path class="o" d="M1699.5,1152.5L1701,1142.7"/>
<path class="p" d="M1701,1142.7L1702.5,1150.1"/>
<path class="c" d="M1702.5,1150.1L1704,1141.1"/>
<path class="r" d="M1704,1141.1L1705.5,1151.4"/>
<path class="b" d="M1705.5,1151.4L1707,1145"/>
<path class="g" d="M1707,1145L1708.5,1151.5"/>
<path class="o" d="M1708.5,1151.5L1710,1147"/>
<path class="p" d="M1710,1147L1711.6,1152.6"/>
<path class="c" d="M1711.6,1152.6L1713.1,1147.3"/>
<path class="r" d="M1713.1,1147.3L1714.6,1158.7"/>
<path class="b" d="M1714.6,1158.7L1716.1,1148.8"/>
<path class="g" d="M1716.1,1148.8L1717.6,1156.3"/>
<path class="o" d="M1717.6,1156.3L1719.1,1147.4"/>
<path class="p" d="M1719.1,1147.4L1720.6,1154.1"/>
<path class="c" d="M1720.6,1154.1L1722.1,1148.2"/>
<path class="r" d="M1722.1,1148.2L1723.6,1155.9"/>
<path class="b" d="M1723.6,1155.9L1725.1,1145.2"/>
<path class="g" d="M1725.1,1145.2L1726.6,1153.3"/>
<path class="o" d="M1726.6,1153.3L1728.2,1141.2"/>
<path class="p" d="M1728.2,1141.2L1729.7,1147.7"/>
<path class="c" d="M1729.7,1147.7L1731.2,1154.9"/>
<path class="r" d="M1731.2,1154.9L1732.7,1153.5"/>
<path class="b" d="M1732.7,1153.5L1734.2,1142"/>
<path class="g" d="M1734.2,1142L1735.7,1144.2"/>
<path class="o" d="M1735.7,1144.2L1737.2,1142.6"/>
<path class="p" d="M1737.2,1142.6L1738.7,1155.3"/>
<path class="c" d="M1738.7,1155.3L1740.2,1152.3"/>
<path class="r" d="M1740.2,1152.3L1741.7,1144"/>
<path class="b" d="M1741.7,1144L1743.2,1143.3"/>
<path class="g" d="M1743.2,1143.3L1744.8,1152.5"/>
<path class="o" d="M1744.8,1152.5L1746.3,1150.4"/>
<path class="p" d="M1746.3,1150.4L1747.8,1152.4"/>
<path class="c" d="M1747.8,1152.4L1749.3,1145.3"/>
<path class="r" d="M1749.3,1145.3L1750.8,1144.3"/>
<path class="b" d="M1750.8,1144.3L1752.3,1147"/>
<path class="g" d="M1752.3,1147L1753.8,1144.8"/>
<path class="o" d="M1753.8,1144.8L1755.3,1138.5"/>
<path class="p" d="M1755.3,1138.5L1756.8,1152.2"/>
<path class="c" d="M1756.8,1152.2L1758.3,1143.6"/>
<path class="r" d="M1758.3,1143.6L1759.9,1151.4"/>
<path class="b" d="M1759.9,1151.4L1761.4,1141.5"/>
<path class="g" d="M1761.4,1141.5L1762.9,1154"/>
<path class="o" d="M1762.9,1154L1764.4,1145.5"/>
<path class="p" d="M1764.4,1145.5L1765.9,1153.6"/>
<path class="c" d="M1765.9,1153.6L1767.4,1155.2"/>
<path class="r" d="M1767.4,1155.2L1768.9,1142.7"/>
<path class="b" d="M1768.9,1142.7L1770.4,1149.7"/>
<path class="g" d="M1770.4,1149.7L1771.9,1141.9"/>
<path class="o" d="M1771.9,1141.9L1773.4,1150"/>
<path class="p" d="M1773.4,1150L1774.9,1142.2"/>
<path class="c" d="M1774.9,1142.2L1776.5,1150"/>
<path class="r" d="M1776.5,1150L1778,1141"/>
<path class="b" d="M1778,1141L1779.5,1156.8"/>
<path class="g" d="M1779.5,1156.8L1781,1141.3"/>
<path class="o" d="M1781,1141.3L1782.5,1144.1"/>
<path class="p" d="M1782.5,1144.1L1784,1147.3"/>
</g>
<g id="ylabels" text-anchor="end">
<text class="tick" x="201.5" y="331.5" style="stroke-width:0">1</text>
<text class="tick" x="199.8" y="777">0.5</text>
<text class="tick" x="199.4" y="1223">0</text>
</g>
<g id="xlabels" text-anchor="middle">
<text class="tick" x="310" y="1283">0</text>
<text class="tick" x="872.3" y="1283">2,000</text>
<text class="tick" x="1434.8" y="1283">4,000</text>
</g>
</svg>
<div id="legend"><div id="dot"></div><div id="name">fft</div></div>
<svg id="icons" width="1944" height="1380" viewBox="0 0 1944 1380"><g id="gearicon"><path d="M193.19,74.65L193.30,73.21L195.10,73.21L195.21,74.65L195.80,74.81L196.62,73.62L198.17,74.52L197.55,75.82L197.98,76.25L199.28,75.63L200.18,77.18L198.99,78.00L199.15,78.59L200.59,78.70L200.59,80.50L199.15,80.61L198.99,81.20L200.18,82.02L199.28,83.57L197.98,82.95L197.55,83.38L198.17,84.68L196.62,85.58L195.80,84.39L195.21,84.55L195.10,85.99L193.30,85.99L193.19,84.55L192.60,84.39L191.78,85.58L190.23,84.68L190.85,83.38L190.42,82.95L189.12,83.57L188.22,82.02L189.41,81.20L189.25,80.61L187.81,80.50L187.81,78.70L189.25,78.59L189.41,78.00L188.22,77.18L189.12,75.63L190.42,76.25L190.85,75.82L190.23,74.52L191.78,73.62L192.60,74.81Z" fill="#9b9b9b" stroke="#151515" stroke-width="0.9" stroke-linejoin="round" paint-order="stroke"/><circle cx="194.2" cy="79.6" r="3.15" fill="#171717"/><circle cx="194.2" cy="79.6" r="1.45" fill="#9b9b9b"/></g></svg>
</body>
</html>
